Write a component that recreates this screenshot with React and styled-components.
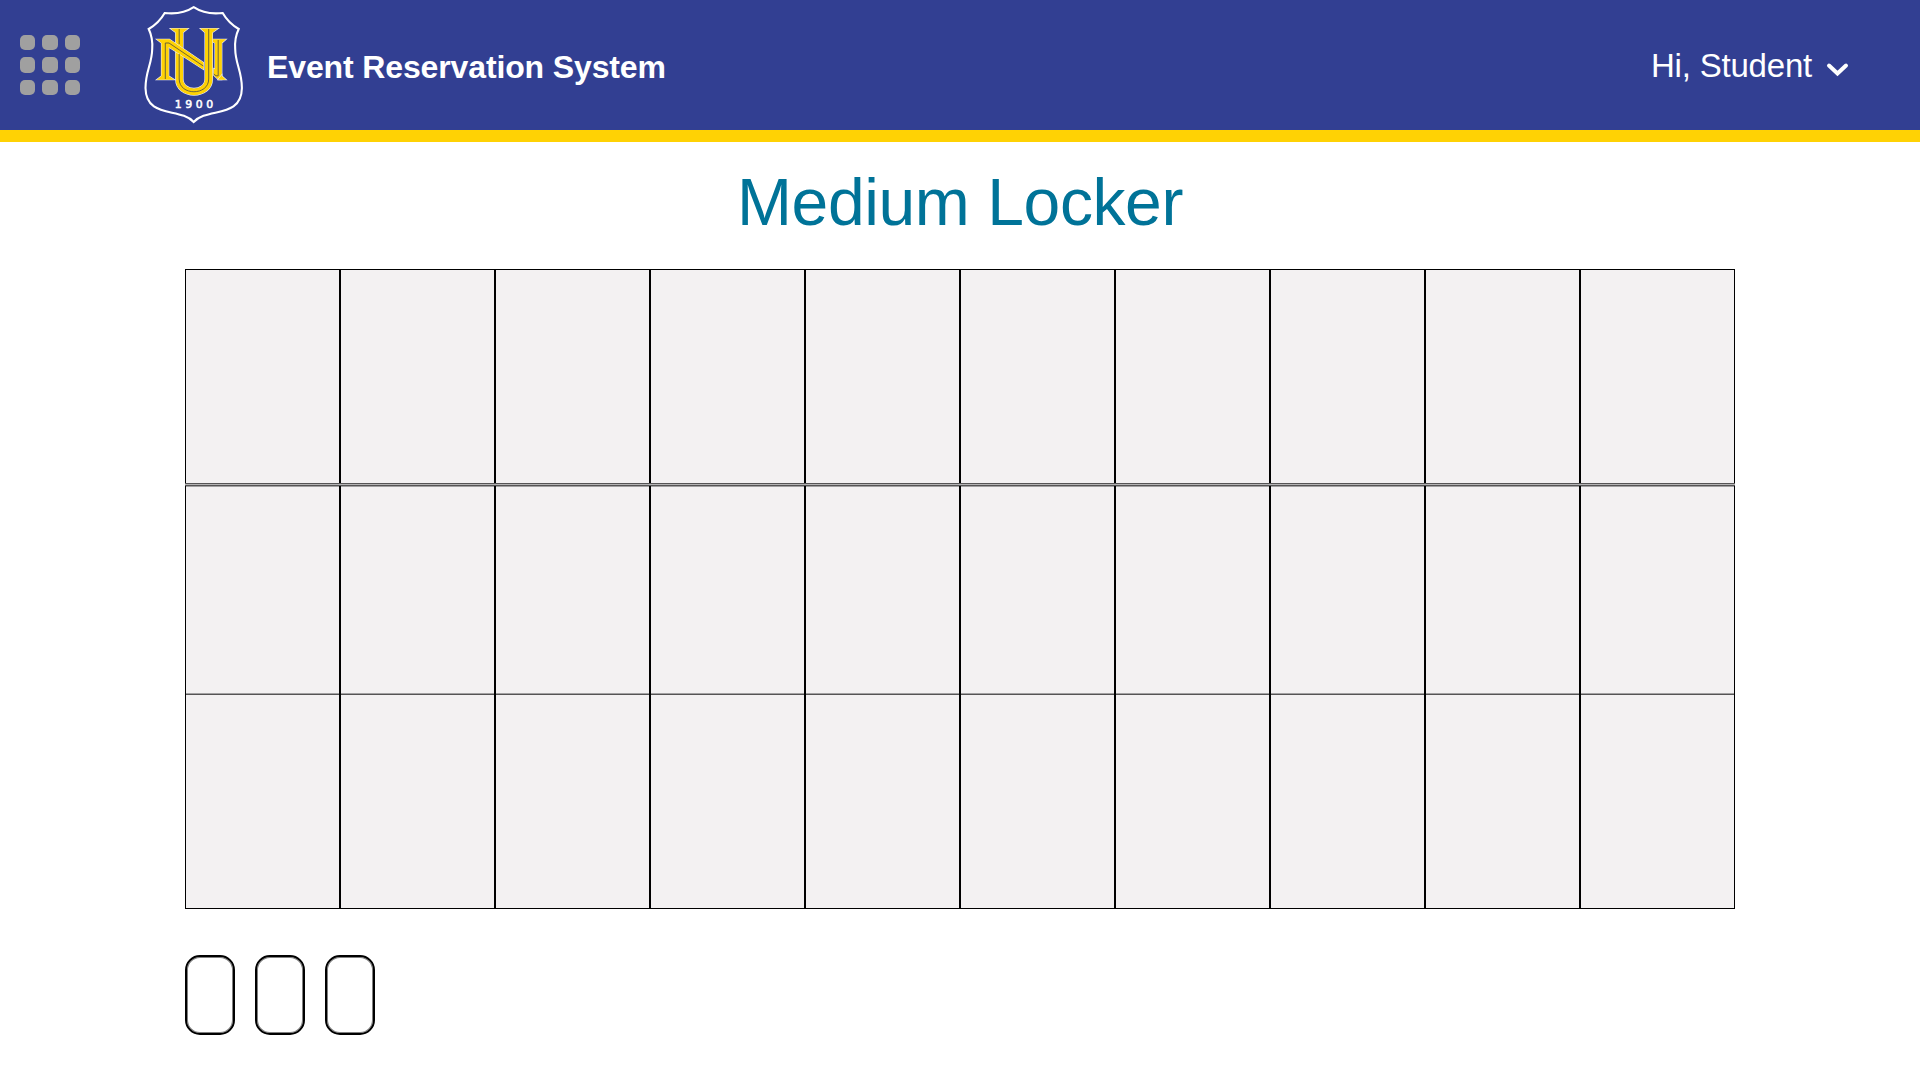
import React from 'react';
import styled, { createGlobalStyle } from 'styled-components';

const GlobalStyle = createGlobalStyle`
  * { box-sizing: border-box; }
  body {
    margin: 0;
    background: #fff;
    font-family: "Liberation Sans", Arial, sans-serif;
  }
`;

const Page = styled.div`
  width: 1920px;
  height: 1080px;
  overflow: hidden;
`;

const Header = styled.header`
  display: flex;
  align-items: center;
  height: 142px;
  padding: 0 70px 0 20px;
  background: #323f92;
  border-bottom: 12px solid #ffd204;
`;

const AppsButton = styled.div`
  display: grid;
  grid-template-columns: 15px 16px 15px;
  grid-template-rows: 15px 16px 15px;
  gap: 7px;
`;

const Dot = styled.span`
  background: #a0a0a0;
  border-radius: 5px;
`;

const Crest = styled.svg`
  display: block;
  margin-left: 60px;
`;

const Brand = styled.div`
  margin: 4px 0 0 17px;
  color: #fff;
  font-size: 32px;
  font-weight: 700;
  line-height: 40px;
  letter-spacing: -0.13px;
  white-space: nowrap;
`;

const Account = styled.div`
  display: flex;
  align-items: center;
  margin: 2px 0 0 auto;
  color: #fff;
  font-size: 33px;
  line-height: 40px;
  letter-spacing: -0.2px;
  white-space: nowrap;
`;

const Chevron = styled.svg`
  display: block;
  margin: 8px 0 0 14px;
`;

const Title = styled.h1`
  margin: 22px 0 0;
  color: #007398;
  font-size: 66px;
  font-weight: 400;
  line-height: 76px;
  letter-spacing: -0.4px;
  text-align: center;
`;

const Lockers = styled.section`
  width: 1550px;
  margin: 29px auto 0;
  border-top: 1px solid #000;
  border-bottom: 1px solid #000;
`;

const LockerRow = styled.div`
  display: grid;
  grid-template-columns: repeat(10, 155px);
  height: ${({ $height }) => $height}px;
`;

const Locker = styled.div`
  background: ${({ $fill }) => $fill};
  border: solid #000;
  border-width: 0 1px;
`;

const Divider = styled.div`
  height: 1px;
  background: ${({ $color }) => $color};
`;

const Legend = styled.div`
  display: flex;
  gap: 20px;
  margin: 46px 0 0 185px;
`;

const LegendBox = styled.div`
  width: 50px;
  height: 80px;
  border: 2px solid #000;
  border-radius: 15px;
  box-shadow: inset 0 0 0 1px #808080;
`;

const columns = Array.from({ length: 10 }, (_, i) => i);

function Row({ height, fill = '#f3f1f2' }) {
  return (
    <LockerRow $height={height}>
      {columns.map((c) => <Locker key={c} $fill={fill} />)}
    </LockerRow>
  );
}

function SchoolCrest() {
  return (
    <Crest width="110" height="130" viewBox="0 0 110 130">
      <path
        d="M53.700 7.200Q42 15 24.700 13Q19 23 8.700 29Q13 38 12.200 49C12 64 5.500 71 5.500 88C6 119 40 107 53.700 122C67.400 107 101.400 119 101.900 88C101.900 71 95.400 64 95.200 49Q94.400 38 98.700 29Q88.400 23 82.700 13Q65.400 15 53.700 7.200Z"
        fill="none" stroke="#fff" strokeWidth="2.100" strokeLinejoin="miter"
      />
      <g fill="#ffd204" stroke="#e6e7f2" strokeWidth="1.200" paintOrder="stroke">
        <path d="M67.500 39.300H86L81.800 43V79.700H78.500L73.800 75.300V68.600L75 69.500V43Z" />
        <path d="M81.800 75V76L86 79.700H78Z" />
        <path d="M30.500 28.500H48L43 32.500V79C43 91.500 65 91.500 65 79V32.500L60.500 28.500H78L72.400 32.500V79C72.400 100.500 35.700 100.500 35.700 79V32.500Z" />
        <path d="M16.700 39.300H29.500L63.500 62.500V69.500L28.700 47V76L34.500 79.700H16.700L21.500 76V43Z" />
      </g>
      <g fill="none" stroke="#5c583f" strokeWidth=".9">
        <path d="M25.300 79V43H29L63.300 66M78.200 40V75.800H76L73.800 74" />
        <path d="M39.200 54V79C39.200 96 68.700 96 68.700 79V29M39.200 29V44" />
      </g>
      <text
        x="34.800" y="108.400" fill="#fff" stroke="#fff" strokeWidth=".55"
        fontFamily='"DejaVu Sans", sans-serif' fontSize="10.900"
        textLength="38.500" lengthAdjust="spacing"
      >
        1900
      </text>
    </Crest>
  );
}

export default function App() {
  return (
    <Page>
      <GlobalStyle />
      <Header>
        <AppsButton>
          {Array.from({ length: 9 }, (_, i) => <Dot key={i} />)}
        </AppsButton>
        <SchoolCrest />
        <Brand>Event Reservation System</Brand>
        <Account>
          Hi, Student
          <Chevron width="24" height="16" viewBox="0 0 24 16">
            <path d="M3 3.500L11.500 11.500L20 3.500" fill="none" stroke="#fff" strokeWidth="4" strokeLinecap="round" strokeLinejoin="miter" />
          </Chevron>
        </Account>
      </Header>
      <Title>Medium Locker</Title>
      <Lockers>
        <Row height={213} />
        <Divider $color="#555455" />
        <Divider $color="#b4b3b4" />
        <Divider $color="#555455" />
        <Row height={1} fill="#a2a1a2" />
        <Row height={206} />
        <Row height={1} fill="#a2a1a2" />
        <Row height={1} fill="#555455" />
        <Row height={213} />
      </Lockers>
      <Legend>
        <LegendBox />
        <LegendBox />
        <LegendBox />
      </Legend>
    </Page>
  );
}
